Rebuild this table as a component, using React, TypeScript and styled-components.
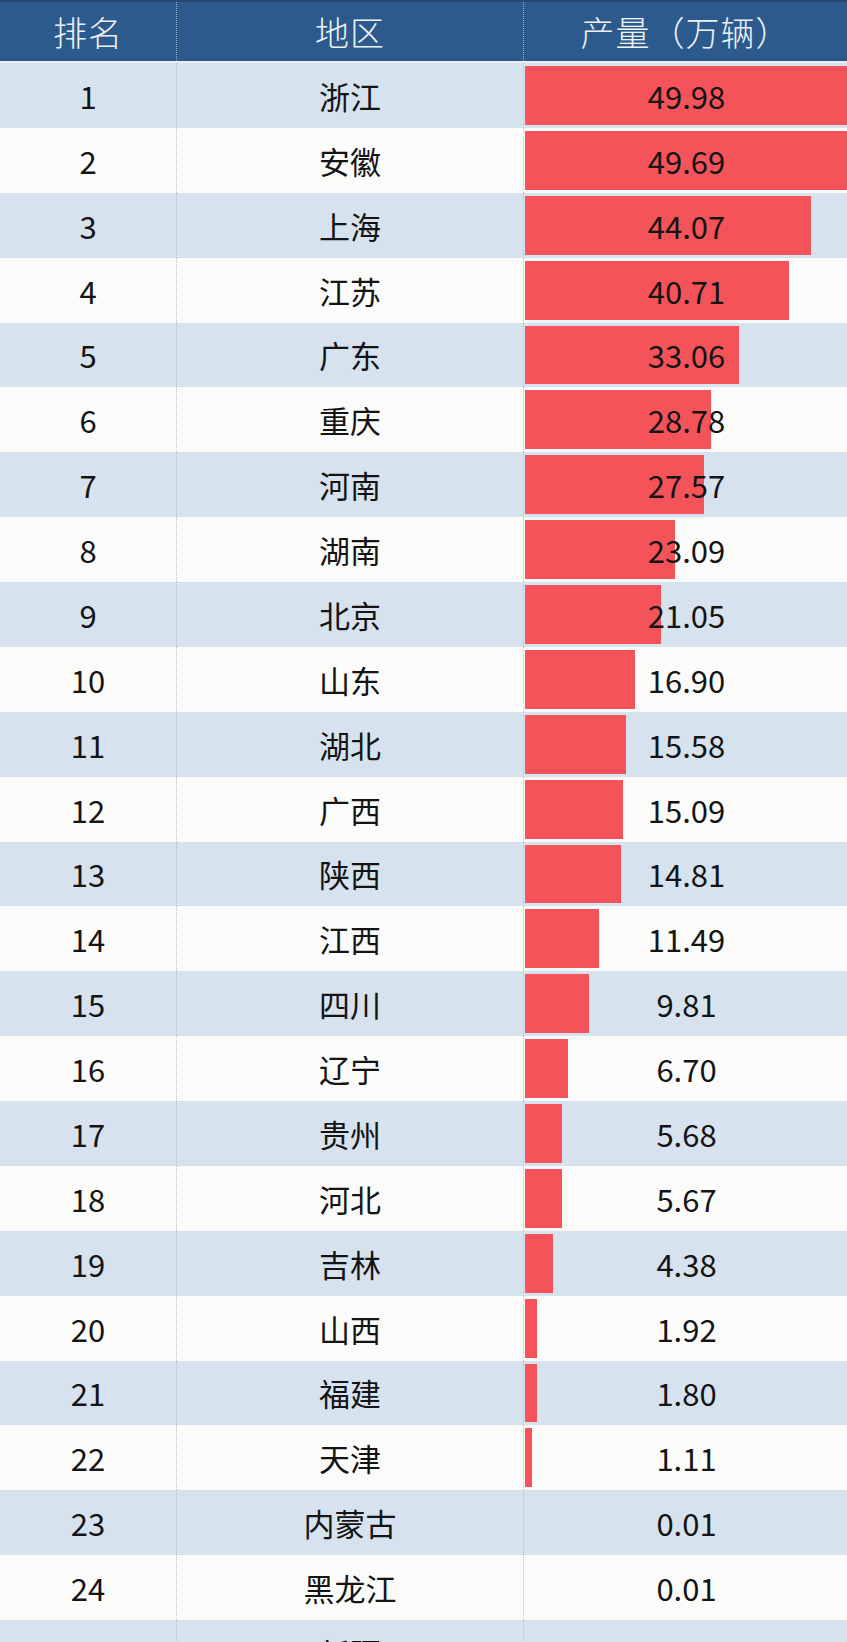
import styled, { createGlobalStyle } from 'styled-components';

const GlobalStyle = createGlobalStyle`
  html,
  body {
    margin: 0;
    padding: 0;
    background: #fbfbfa;
    overflow: hidden;
  }

  body {
    font-family: 'Noto Sans CJK SC', 'Noto Sans', sans-serif;
    color: #141414;
  }
`;

interface IRegion {
  name: string;
  value: number;
}

const regions: IRegion[] = [
  { name: '浙江', value: 49.98 },
  { name: '安徽', value: 49.69 },
  { name: '上海', value: 44.07 },
  { name: '江苏', value: 40.71 },
  { name: '广东', value: 33.06 },
  { name: '重庆', value: 28.78 },
  { name: '河南', value: 27.57 },
  { name: '湖南', value: 23.09 },
  { name: '北京', value: 21.05 },
  { name: '山东', value: 16.9 },
  { name: '湖北', value: 15.58 },
  { name: '广西', value: 15.09 },
  { name: '陕西', value: 14.81 },
  { name: '江西', value: 11.49 },
  { name: '四川', value: 9.81 },
  { name: '辽宁', value: 6.7 },
  { name: '贵州', value: 5.68 },
  { name: '河北', value: 5.67 },
  { name: '吉林', value: 4.38 },
  { name: '山西', value: 1.92 },
  { name: '福建', value: 1.8 },
  { name: '天津', value: 1.11 },
  { name: '内蒙古', value: 0.01 },
  { name: '黑龙江', value: 0.01 },
  { name: '新疆', value: 0.01 },
];

// px per 万辆, bar column is 324px wide for ~50
const BAR_SCALE = 6.48;

export default function App() {
  return (
    <>
      <GlobalStyle />
      <Table>
        <HeaderRow>
          <HeadCell>排名</HeadCell>
          <HeadCell $divider>地区</HeadCell>
          <HeadCell $divider>产量（万辆）</HeadCell>
        </HeaderRow>
        {regions.map((item, index) => {
          const barWidth = Math.max(item.value * BAR_SCALE, 0);
          return (
            <Row key={item.name} $odd={index % 2 === 0}>
              <Cell>{index + 1}</Cell>
              <Cell $divider>{item.name}</Cell>
              <ValueCell $divider>
                {item.value >= 0.5 && <Bar style={{ width: barWidth }} />}
                <span>{item.value.toFixed(2)}</span>
              </ValueCell>
            </Row>
          );
        })}
      </Table>
    </>
  );
}

const Table = styled.div`
  display: flex;
  flex-direction: column;
  width: 847px;
`;

const HeaderRow = styled.div`
  display: grid;
  grid-template-columns: 176px 347px 324px;
  height: 63px;
  background-color: #2d5a8c;
  border-top: 2px solid #24486f;
  box-sizing: border-box;
  border-bottom: 2px solid #e9edf2;
`;

const HeadCell = styled.div<{ $divider?: boolean }>`
  display: flex;
  align-items: center;
  justify-content: center;
  font-size: 34px;
  font-weight: 300;
  color: #eef2f7;
  letter-spacing: 1px;
  border-left: ${(p) => (p.$divider ? '1px dotted #9fb3c9' : 'none')};
`;

const Row = styled.div<{ $odd: boolean }>`
  display: grid;
  grid-template-columns: 176px 347px 324px;
  height: 64.875px;
  background-color: ${(p) => (p.$odd ? '#d6e3ef' : '#fbfbfa')};
`;

const Cell = styled.div<{ $divider?: boolean }>`
  display: flex;
  align-items: center;
  justify-content: center;
  font-size: 31px;
  line-height: 1;
  border-left: ${(p) => (p.$divider ? '1px dotted #b9c2cc' : 'none')};
`;

const ValueCell = styled(Cell)`
  position: relative;

  span {
    position: relative;
    padding-left: 2px;
  }
`;

const Bar = styled.div`
  position: absolute;
  left: 1px;
  top: 3px;
  bottom: 3px;
  background-color: #f5535a;
`;
